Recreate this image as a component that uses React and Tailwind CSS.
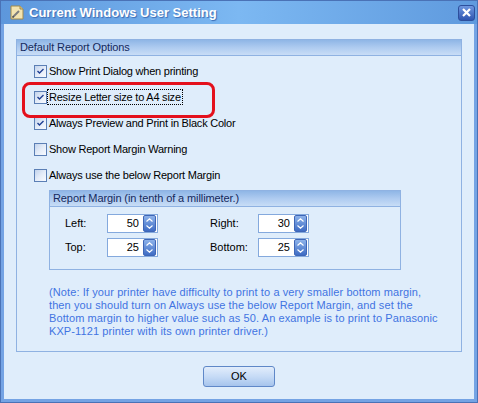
import { useState } from "react";

const font = { fontFamily: '"Liberation Sans", Arial, sans-serif' };

function Check({ checked, label, focused }) {
  return (
    <div className="flex h-[26px] items-center pl-[17px]">
      <span className="flex h-[13px] w-[13px] items-center justify-center border border-[#5b7fb5] bg-gradient-to-br from-[#c2d3ec] via-[#e4ecf8] to-[#f8fbff]">
        {checked && (
          <svg width="9" height="8" viewBox="0 0 9 8">
            <path d="M1.5 4 L3.5 6 L7.5 2" fill="none" stroke="#1f3f93" strokeWidth="1.4" />
          </svg>
        )}
      </span>
      <span
        className={
          "ml-[1px] px-[1px] text-[11px] leading-[14px] tracking-[-0.22px] text-black " +
          (focused ? "outline outline-1 outline-dotted outline-black" : "")
        }
      >
        {label}
      </span>
    </div>
  );
}

function Spin({ value }) {
  return (
    <div className="flex h-[19px] w-[51px] items-center justify-end border border-[#84a9dd] bg-white pr-[1px]">
      <span className="mr-[4px] text-[11px] text-black">{value}</span>
      <span className="flex h-[17px] w-[13px] flex-col items-center justify-center gap-[3px] rounded-[2px] border border-[#3f66b6] bg-gradient-to-b from-[#8db2ea] to-[#3f6cc4]">
        <svg width="7" height="4" viewBox="0 0 7 4">
          <path d="M0.5 3.5 L3.5 0.8 L6.5 3.5" fill="none" stroke="#fff" strokeWidth="1.2" />
        </svg>
        <svg width="7" height="4" viewBox="0 0 7 4">
          <path d="M0.5 0.5 L3.5 3.2 L6.5 0.5" fill="none" stroke="#fff" strokeWidth="1.2" />
        </svg>
      </span>
    </div>
  );
}

function Header({ children }) {
  return (
    <div className="flex h-[16px] items-center border-b border-[#8fb2e2] bg-gradient-to-b from-[#8fb6e6] via-[#aecbf0] to-[#c8ddf6] pl-[3px] text-[11px] tracking-[-0.1px] text-[#15295c]">
      {children}
    </div>
  );
}

export default function App() {
  const [opts] = useState([
    { label: "Show Print Dialog when printing", checked: true },
    { label: "Resize Letter size to A4 size", checked: true, focused: true },
    { label: "Always Preview and Print in Black Color", checked: true },
    { label: "Show Report Margin Warning", checked: false },
    { label: "Always use the below Report Margin", checked: false },
  ]);

  return (
    <div style={font} className="relative flex h-[403px] w-[478px] flex-col border border-[#4a72b6] bg-[#6b9de2]">
      {/* title bar */}
      <div className="flex h-[23px] items-center bg-gradient-to-r from-[#5d97dc] via-[#7cb8f2] to-[#5f9ade] pl-[9px] pr-[2px]">
        <svg width="14" height="15" viewBox="0 0 14 15">
          <path d="M1 1 H10 L13 4 V14 H1 Z" fill="#f3e4b0" stroke="#a08a4c" strokeWidth="1" />
          <path d="M10 1 V4 H13" fill="#e0cc8c" stroke="#a08a4c" strokeWidth="1" />
          <path d="M3 12 L9 6" stroke="#7d7d7d" strokeWidth="2" />
          <path d="M2.5 12.5 L3.5 11.5" stroke="#333" strokeWidth="1.5" />
        </svg>
        <span
          className="ml-[5px] text-[13px] font-bold text-white"
          style={{ textShadow: "1px 1px 1px #3b6cb4" }}
        >
          Current Windows User Setting
        </span>
        <span className="ml-auto flex h-[16px] w-[17px] items-center justify-center rounded-[3px] border border-[#2d4f9c] bg-gradient-to-b from-[#6f97e0] to-[#2f55b0]">
          <svg width="9" height="9" viewBox="0 0 9 9">
            <path d="M1 1 L8 8 M8 1 L1 8" stroke="#fff" strokeWidth="2.2" />
          </svg>
        </span>
      </div>

      {/* body */}
      <div className="flex flex-1 flex-col border-x-[3px] border-b-[3px] border-[#74a3e4] bg-[#dfedfb] px-[12px] pt-[15px]">
        <div className="flex h-[313px] flex-col border border-[#8fb2e2]">
          <Header>Default Report Options</Header>
          <div className="pt-[2px]">
            {opts.map((o) => (
              <Check key={o.label} {...o} />
            ))}
          </div>

          <div className="ml-[32px] mt-[2px] flex h-[80px] w-[352px] flex-col border border-[#8fb2e2]">
            <Header>Report Margin (in tenth of a millimeter.)</Header>
            <div className="grid grid-cols-[42px_51px_52px_48px_51px] items-center gap-y-[5px] pl-[15px] pt-[7px] text-[11px] text-black">
              <span>Left:</span>
              <Spin value="50" />
              <span />
              <span>Right:</span>
              <Spin value="30" />
              <span>Top:</span>
              <Spin value="25" />
              <span />
              <span>Bottom:</span>
              <Spin value="25" />
            </div>
          </div>

          <p className="ml-[32px] mt-[16px] whitespace-nowrap text-[11px] leading-[13px] tracking-[0.1px] text-[#4274e2]">
            (Note: If your printer have difficulty to print to a very smaller bottom margin,
            <br />
            then you should turn on Always use the below Report Margin, and set the
            <br />
            Bottom margin to higher value such as 50. An example is to print to Panasonic
            <br />
            KXP-1121 printer with its own printer driver.)
          </p>
        </div>

        <div className="mt-[14px] flex justify-center">
          <button className="h-[21px] w-[72px] rounded-[3px] border border-[#5f88c8] bg-gradient-to-b from-[#e2edfb] via-[#c6dbf6] to-[#a6c4ec] text-[11px] text-black">
            OK
          </button>
        </div>
      </div>

      {/* red annotation */}
      <div className="absolute left-[21px] top-[81px] h-[36px] w-[193px] rounded-[8px] border-[3px] border-[#e4101c]" />
    </div>
  );
}
